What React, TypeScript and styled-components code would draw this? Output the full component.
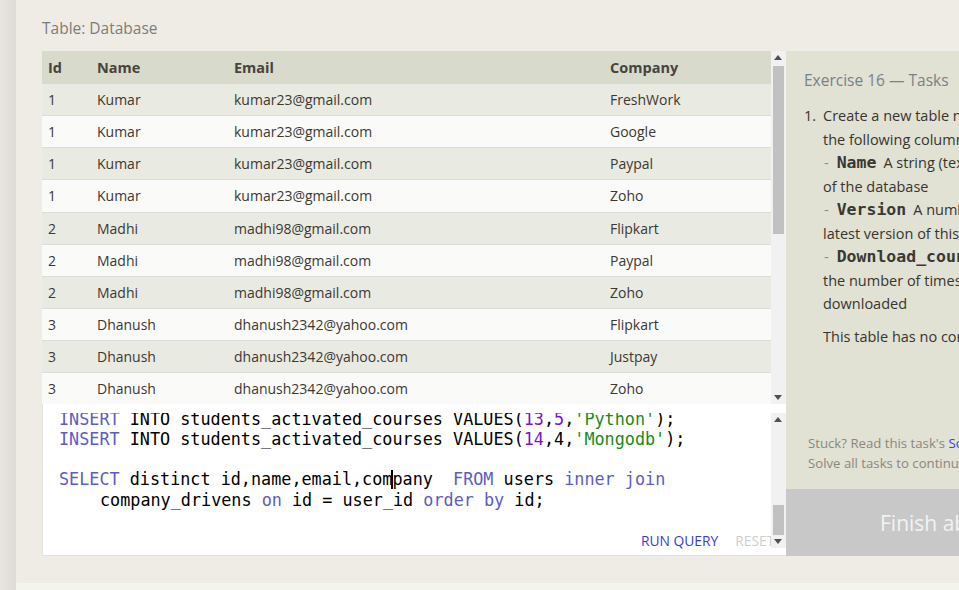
import React from "react";
import styled, { createGlobalStyle } from "styled-components";

const GlobalStyle = createGlobalStyle`
  html, body { margin: 0; padding: 0; }
  body {
    background: #f4f4ef;
    font-family: "Open Sans", "Noto Sans", sans-serif;
    overflow: hidden;
    width: 959px;
    height: 590px;
  }
`;

const UI = `"Open Sans", "Noto Sans", sans-serif`;
const MONO = `"DejaVu Sans Mono", "Liberation Mono", monospace`;

const Page = styled.div`
  display: flex;
  width: 959px;
  height: 590px;
  overflow: hidden;
`;

const LeftStrip = styled.div`
  width: 16px;
  flex: 0 0 16px;
  height: 590px;
  background: linear-gradient(to right, #e9e6e2, #dedad5);
`;

const Main = styled.div`
  flex: 1 0 auto;
  height: 583px;
  background: #efece5;
  padding: 17px 0 0 26px;
  box-sizing: border-box;
  border-bottom-left-radius: 2px;
`;

const Title = styled.div`
  font-family: ${UI};
  font-size: 15.5px;
  line-height: 22px;
  color: #7d7d78;
  height: 34px;
`;

const Workspace = styled.div`
  display: flex;
  align-items: flex-start;
`;

const LeftCol = styled.div`
  width: 744px;
  flex: 0 0 744px;
  display: flex;
  flex-direction: column;
`;

const TableBox = styled.div`
  height: 353px;
  display: flex;
  overflow: hidden;
  background: #fafaf9;
`;

const TableScroll = styled.div`
  flex: 1;
  overflow: hidden;
`;

const Table = styled.table`
  width: 729px;
  border-collapse: collapse;
  table-layout: fixed;
  font-family: ${UI};
  font-size: 14px;
  color: #3d3832;
`;

const HeadCell = styled.th<{ $w: number }>`
  width: ${(p) => p.$w}px;
  height: 33px;
  padding: 0 0 0 6px;
  text-align: left;
  font-weight: 700;
  font-size: 14.5px;
  color: #47433d;
  background: #d8dacb;
  box-sizing: border-box;
`;

const Row = styled.tr<{ $odd: boolean }>`
  background: ${(p) => (p.$odd ? "#e9eae1" : "#fafaf9")};
  border-bottom: 1px solid #dcdcd8;
`;

const Cell = styled.td`
  height: 31.15px;
  padding: 0 0 0 6px;
  white-space: nowrap;
  overflow: hidden;
`;

const ScrollBar = styled.div<{ $h: number }>`
  width: 15px;
  flex: 0 0 15px;
  height: ${(p) => p.$h}px;
  background: #f1f1f1;
  position: relative;
`;

const Thumb = styled.div<{ $top: number; $h: number }>`
  position: absolute;
  left: 2px;
  right: 2px;
  top: ${(p) => p.$top}px;
  height: ${(p) => p.$h}px;
  background: #c1c1c1;
`;

const Arrow = styled.div<{ $dir: "up" | "down" }>`
  position: absolute;
  left: 3px;
  width: 0;
  height: 0;
  border-left: 4.5px solid transparent;
  border-right: 4.5px solid transparent;
  ${(p) =>
    p.$dir === "up"
      ? "top: 4px; border-bottom: 5px solid #505050;"
      : "bottom: 4px; border-top: 5px solid #505050;"}
`;

const EditorBox = styled.div`
  height: 152px;
  background: #ffffff;
  border-left: 1px solid #e6e3dc;
  border-bottom: 1px solid #e6e3dc;
  box-sizing: border-box;
  display: flex;
  padding-top: 9px;
`;

const EditorMain = styled.div`
  flex: 1;
  display: flex;
  flex-direction: column;
  overflow: hidden;
`;

const CodeViewport = styled.div`
  height: 116px;
  overflow: hidden;
  padding-left: 16px;
  padding-top: 2px;
  box-sizing: border-box;
`;

const Code = styled.div`
  margin-top: -6.5px;
  font-family: ${MONO};
  font-size: 16.8px;
  line-height: 20.3px;
  color: #000;
  white-space: pre;
`;

const Line = styled.div<{ $indent?: boolean }>`
  height: 20.3px;
  padding-left: ${(p) => (p.$indent ? "41px" : "0")};
`;

const Kw = styled.span`
  color: #5c5cc4;
`;
const Num = styled.span`
  color: #7a12d4;
`;
const Str = styled.span`
  color: #1a8a1a;
`;

const Caret = styled.span`
  display: inline-block;
  width: 2px;
  height: 19px;
  background: #000;
  vertical-align: -4px;
  margin: 0 -1px;
`;

const EditorFooter = styled.div`
  display: flex;
  gap: 17px;
  padding-left: 598px;
  height: 22px;
  align-items: center;
  white-space: nowrap;
`;

const TextButton = styled.span<{ $muted?: boolean }>`
  font-family: ${UI};
  font-size: 13.8px;
  color: ${(p) => (p.$muted ? "#cfcfcf" : "#3a3ad8")};
`;

const RightCol = styled.div`
  width: 320px;
  flex: 0 0 320px;
  display: flex;
  flex-direction: column;
`;

const TasksPanel = styled.div`
  height: 438px;
  background: #e1e1d4;
  padding: 18px 0 0 18px;
  box-sizing: border-box;
  display: flex;
  flex-direction: column;
  font-family: ${UI};
  overflow: hidden;
`;

const TasksTitle = styled.div`
  font-size: 15.5px;
  line-height: 22px;
  color: #7b7f88;
`;

const TaskList = styled.ol`
  list-style: none;
  margin: 13px 0 0 0;
  padding: 0;
  font-size: 14.5px;
  line-height: 23.55px;
  color: #38352f;
  white-space: nowrap;
`;

const TaskItem = styled.li`
  display: flex;
`;

const ItemNumber = styled.span`
  width: 19px;
  flex: 0 0 19px;
`;

const ItemBody = styled.div``;

const Dash = styled.span`
  color: #8a8a86;
  margin-right: 8px;
  margin-left: 1px;
`;

const ColName = styled.code`
  font-family: ${MONO};
  font-weight: 700;
  font-size: 16.5px;
  color: #3a3833;
  margin-right: 7px;
`;

const Note = styled.p`
  margin: 9px 0 0 0;
  padding-left: 19px;
  font-size: 14.5px;
  line-height: 23.4px;
  color: #38352f;
  white-space: nowrap;
`;

const Hint = styled.div`
  margin-top: auto;
  padding: 0 0 16px 4px;
  font-size: 13.2px;
  line-height: 20px;
  color: #8b877f;
  white-space: nowrap;
`;

const HintLink = styled.span`
  color: #3a3af0;
`;

const FinishButton = styled.div`
  height: 67px;
  background: #c8c8c8;
  display: flex;
  align-items: center;
  padding-left: 94px;
  font-family: ${UI};
  font-size: 21px;
  color: #f2f2f2;
  white-space: nowrap;
`;

type Rec = { id: number; name: string; email: string; company: string };

const rows: Rec[] = [
  { id: 1, name: "Kumar", email: "kumar23@gmail.com", company: "FreshWork" },
  { id: 1, name: "Kumar", email: "kumar23@gmail.com", company: "Google" },
  { id: 1, name: "Kumar", email: "kumar23@gmail.com", company: "Paypal" },
  { id: 1, name: "Kumar", email: "kumar23@gmail.com", company: "Zoho" },
  { id: 2, name: "Madhi", email: "madhi98@gmail.com", company: "Flipkart" },
  { id: 2, name: "Madhi", email: "madhi98@gmail.com", company: "Paypal" },
  { id: 2, name: "Madhi", email: "madhi98@gmail.com", company: "Zoho" },
  { id: 3, name: "Dhanush", email: "dhanush2342@yahoo.com", company: "Flipkart" },
  { id: 3, name: "Dhanush", email: "dhanush2342@yahoo.com", company: "Justpay" },
  { id: 3, name: "Dhanush", email: "dhanush2342@yahoo.com", company: "Zoho" },
  { id: 4, name: "Ram", email: "ram11@gmail.com", company: "Google" },
];

export default function App() {
  return (
    <>
      <GlobalStyle />
      <Page>
        <LeftStrip />
        <Main>
          <Title>Table: Database</Title>
          <Workspace>
            <LeftCol>
              <TableBox>
                <TableScroll>
                  <Table>
                    <thead>
                      <tr>
                        <HeadCell $w={49}>Id</HeadCell>
                        <HeadCell $w={137}>Name</HeadCell>
                        <HeadCell $w={376}>Email</HeadCell>
                        <HeadCell $w={167}>Company</HeadCell>
                      </tr>
                    </thead>
                    <tbody>
                      {rows.map((r, i) => (
                        <Row key={i} $odd={i % 2 === 0}>
                          <Cell>{r.id}</Cell>
                          <Cell>{r.name}</Cell>
                          <Cell>{r.email}</Cell>
                          <Cell>{r.company}</Cell>
                        </Row>
                      ))}
                    </tbody>
                  </Table>
                </TableScroll>
                <ScrollBar $h={353}>
                  <Arrow $dir="up" />
                  <Thumb $top={15} $h={168} />
                  <Arrow $dir="down" />
                </ScrollBar>
              </TableBox>
              <EditorBox>
                <EditorMain>
                  <CodeViewport>
                    <Code>
                      <Line>
                        <Kw>INSERT</Kw> INTO students_activated_courses VALUES(<Num>13</Num>,<Num>5</Num>,<Str>'Python'</Str>);
                      </Line>
                      <Line>
                        <Kw>INSERT</Kw> INTO students_activated_courses VALUES(<Num>14</Num>,4,<Str>'Mongodb'</Str>);
                      </Line>
                      <Line> </Line>
                      <Line>
                        <Kw>SELECT</Kw> distinct id,name,email,com<Caret />pany  <Kw>FROM</Kw> users <Kw>inner</Kw> <Kw>join</Kw>
                      </Line>
                      <Line $indent>
                        company_drivens <Kw>on</Kw> id = user_id <Kw>order</Kw> <Kw>by</Kw> id;
                      </Line>
                    </Code>
                  </CodeViewport>
                  <EditorFooter>
                    <TextButton>RUN QUERY</TextButton>
                    <TextButton $muted>RESET</TextButton>
                  </EditorFooter>
                </EditorMain>
                <ScrollBar $h={135}>
                  <Arrow $dir="up" />
                  <Thumb $top={92} $h={30} />
                  <Arrow $dir="down" />
                </ScrollBar>
              </EditorBox>
            </LeftCol>
            <RightCol>
              <TasksPanel>
                <TasksTitle>Exercise 16 — Tasks</TasksTitle>
                <TaskList>
                  <TaskItem>
                    <ItemNumber>1.</ItemNumber>
                    <ItemBody>
                      Create a new table named <b>Database</b> with
                      <br />
                      the following columns:
                      <br />
                      <Dash>-</Dash>
                      <ColName>Name</ColName>A string (text) describing the name
                      <br />
                      of the database
                      <br />
                      <Dash>-</Dash>
                      <ColName>Version</ColName>A number (floating point) of the
                      <br />
                      latest version of this database
                      <br />
                      <Dash>-</Dash>
                      <ColName>Download_count</ColName>An integer count of
                      <br />
                      the number of times this database was
                      <br />
                      downloaded
                    </ItemBody>
                  </TaskItem>
                </TaskList>
                <Note>This table has no constraints.</Note>
                <Hint>
                  Stuck? Read this task's <HintLink>Solution</HintLink>.
                  <br />
                  Solve all tasks to continue to the next lesson.
                </Hint>
              </TasksPanel>
              <FinishButton>Finish above Tasks</FinishButton>
            </RightCol>
          </Workspace>
        </Main>
      </Page>
    </>
  );
}
